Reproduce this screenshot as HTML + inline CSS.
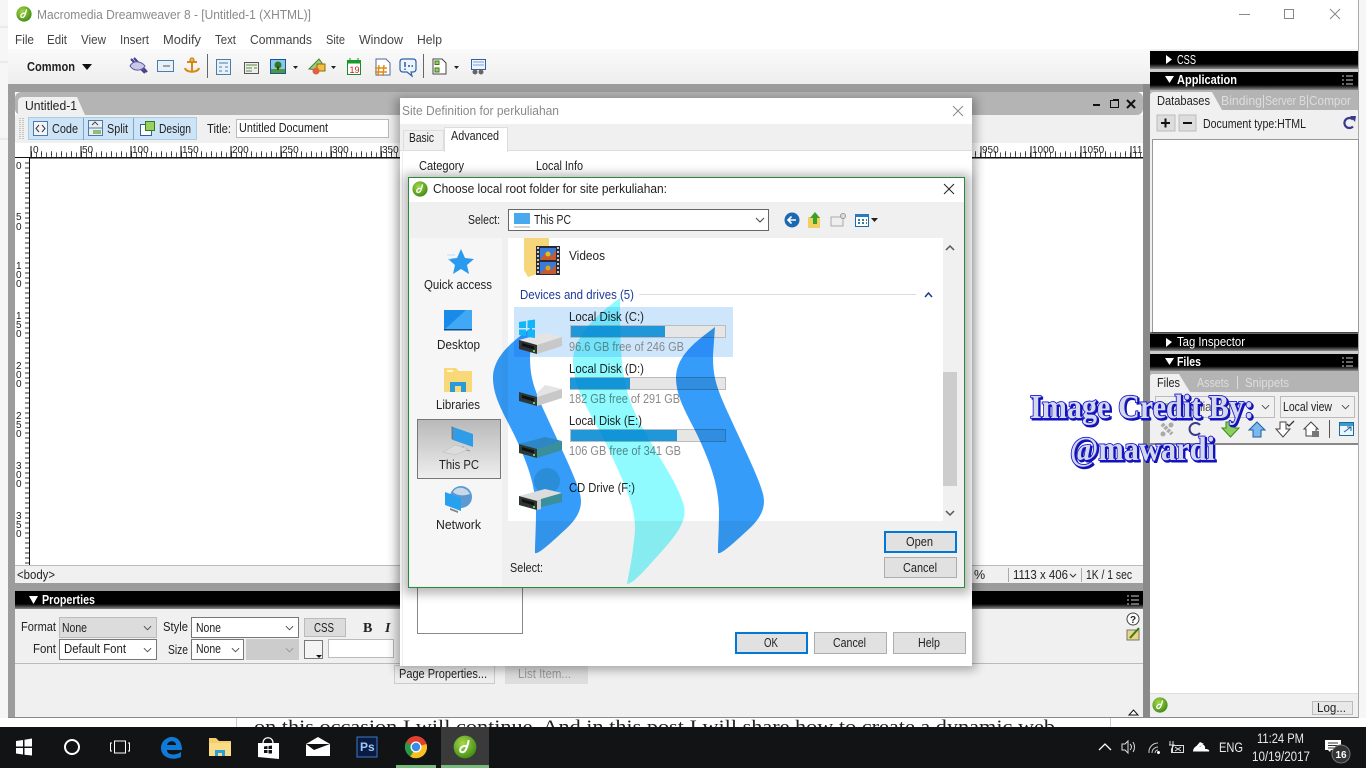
<!DOCTYPE html>
<html lang="en"><head><meta charset="utf-8"><title>Macromedia Dreamweaver 8</title>
<style>
html,body{margin:0;padding:0;width:1366px;height:768px;overflow:hidden;background:#fff}
svg{display:block;position:absolute;left:0;top:0}
text{font-family:"Liberation Sans",sans-serif;font-size:12.5px;fill:#222}
.m{fill:#444}
.g{fill:#999}
.w{fill:#fff}
.b{font-weight:bold}
.n{fill:#1a3a9a}
</style></head><body>
<svg width="1366" height="768" viewBox="0 0 1366 768" xmlns="http://www.w3.org/2000/svg">
<defs>
<linearGradient id="hd" x1="0" y1="0" x2="0" y2="1"><stop offset="0" stop-color="#000"/><stop offset=".72" stop-color="#000"/><stop offset="1" stop-color="#8a8a8a"/></linearGradient>
<linearGradient id="sel" x1="0" y1="0" x2="0" y2="1"><stop offset="0" stop-color="#b8b8b8"/><stop offset="1" stop-color="#eee"/></linearGradient>
<linearGradient id="tb" x1="0" y1="0" x2="0" y2="1"><stop offset="0" stop-color="#fafafa"/><stop offset="1" stop-color="#eee"/></linearGradient>
<radialGradient id="dwg" cx=".4" cy=".35" r=".7"><stop offset="0" stop-color="#a8d84a"/><stop offset="1" stop-color="#3d8a12"/></radialGradient>
<filter id="sh" x="-5%" y="-5%" width="110%" height="110%"><feGaussianBlur stdDeviation="5"/></filter>
<symbol id="dw" viewBox="0 0 16 16"><circle cx="8" cy="8" r="7.600" fill="url(#dwg)"/><path d="M10.500 3.400C10 6 9.300 9 8 10.600 6.800 12 4.600 11.800 4.800 9.800 5 8 7.400 6.600 9.600 7.600" fill="none" stroke="#fff" stroke-width="1.300"/></symbol>
<symbol id="ch" viewBox="0 0 10 6"><path d="M1 1 5 5 9 1" fill="none" stroke="#444" stroke-width="1"/></symbol>
</defs>

<rect width="1366" height="768" fill="#fff"/>
<rect x="0" y="0" width="8" height="727" fill="#f6f6f6"/>
<path d="M0 27H8M0 62H8M0 139H8" stroke="#ddd"/>
<rect x="8" y="0" width="1350" height="720" fill="#fff"/>
<rect x="1358" y="0" width="8" height="727" fill="#f6f6f6"/>
<rect x="1358" y="0" width="1" height="720" fill="#aaa"/>
<rect x="0" y="718" width="1366" height="9" fill="#fff"/>
<path d="M236.500 718V727M1110.500 718V727" stroke="#ccc"/>
<text x="254" y="733" style="font-family:'Liberation Serif',serif;font-size:19px" fill="#333" textLength="801" lengthAdjust="spacingAndGlyphs">on this occasion I will continue. And in this post I will share how to create a dynamic web</text>
<rect x="8" y="717" width="1350" height="1" fill="#8a8a8a"/>

<!-- title + menu -->
<use href="#dw" x="16" y="6" width="16" height="16"/>
<text x="37" y="19" textLength="274" lengthAdjust="spacingAndGlyphs" style="fill:#8a8a8a">Macromedia Dreamweaver 8 - [Untitled-1 (XHTML)]</text>
<path d="M1239 14.500H1250" stroke="#888"/>
<rect x="1284.500" y="9.500" width="9" height="9" fill="none" stroke="#888"/>
<path d="M1330 9 1340 19M1340 9 1330 19" stroke="#888"/>
<text x="15" y="44" class="m" textLength="19" lengthAdjust="spacingAndGlyphs">File</text>
<text x="47" y="44" class="m" textLength="20" lengthAdjust="spacingAndGlyphs">Edit</text>
<text x="81" y="44" class="m" textLength="25" lengthAdjust="spacingAndGlyphs">View</text>
<text x="120" y="44" class="m" textLength="29" lengthAdjust="spacingAndGlyphs">Insert</text>
<text x="163" y="44" class="m" textLength="38" lengthAdjust="spacingAndGlyphs">Modify</text>
<text x="215" y="44" class="m" textLength="21" lengthAdjust="spacingAndGlyphs">Text</text>
<text x="250" y="44" class="m" textLength="62" lengthAdjust="spacingAndGlyphs">Commands</text>
<text x="326" y="44" class="m" textLength="19" lengthAdjust="spacingAndGlyphs">Site</text>
<text x="359" y="44" class="m" textLength="44" lengthAdjust="spacingAndGlyphs">Window</text>
<text x="417" y="44" class="m" textLength="25" lengthAdjust="spacingAndGlyphs">Help</text>

<!-- insert bar -->
<rect x="8" y="49" width="1142" height="35" fill="url(#tb)"/>
<rect x="8" y="84" width="1142" height="8" fill="#9c9c9c"/>
<rect x="8" y="92" width="7" height="625" fill="#9c9c9c"/>
<text x="27" y="71" class="b" textLength="48" lengthAdjust="spacingAndGlyphs">Common</text>
<path d="M82 64H92L87 70Z" fill="#111"/>
<path d="M131 59 145 73M134 58 147 72" stroke="#4a3f90" stroke-width="2.200" fill="none"/><path d="M130 66C134 59 142 62 145 66 142 71 134 72 130 66Z" fill="#c8c8e8" stroke="#5a5a9a"/>
<rect x="157.500" y="60.500" width="16" height="11" fill="#e8f0f8" stroke="#4a7ea8"/><path d="M163 66H170" stroke="#555"/>
<path d="M192 58V72M187 62H197M185 68C186 73 198 73 199 68" fill="none" stroke="#d88a10" stroke-width="2"/><circle cx="192" cy="60" r="2" fill="#f5c050" stroke="#b87010"/>
<path d="M207.500 54V78" stroke="#666"/>
<rect x="216.500" y="59.500" width="14" height="15" fill="#e8f0f8" stroke="#4a7ea8"/><path d="M219 63H228M219 67H222M225 67H228M219 71H222M225 71H228" stroke="#4a7ea8"/>
<rect x="244.500" y="62.500" width="14" height="11" fill="#eee" stroke="#555"/><path d="M246 65H257M246 68H252M254 68H257M246 71H252" stroke="#5a8a3a"/>
<rect x="270.500" y="59.500" width="15" height="14" fill="#88c8e8" stroke="#2050a0"/><rect x="271" y="69" width="14" height="4" fill="#4a9a3a"/><circle cx="278" cy="65" r="3.500" fill="#2a7a2a"/><rect x="277" y="66" width="2" height="4" fill="#5a3a10"/>
<path d="M293 66H298L295.500 69Z" fill="#222"/>
<path d="M309 69 319 59 322 63 318 70Z" fill="#9ad07a" stroke="#4a7a3a"/><rect x="317" y="64" width="8" height="7" fill="#f0c040" stroke="#8a6a10"/><circle cx="316" cy="71" r="3.500" fill="#e06040"/>
<path d="M331 66H336L333.500 69Z" fill="#222"/>
<rect x="347.500" y="60.500" width="13" height="14" fill="#fff" stroke="#1a8a2a"/><rect x="347" y="60" width="14" height="3.500" fill="#1a9a2a"/><path d="M350 58V61M358 58V61" stroke="#1a8a2a"/><text x="349.500" y="73" style="font-size:9px;fill:#c02020">19</text>
<path d="M376 59H386L390 63V75H376Z" fill="#fff" stroke="#4a6a9a"/><path d="M375 68H387M375 72H387M379 65 378 76M384 65 383 76" stroke="#e08a10" stroke-width="1.400"/>
<path d="M403 59H413Q416 59 416 62V69Q416 72 413 72H411L412 76 407 72H403Q400 72 400 69V62Q400 59 403 59Z" fill="#eef4fb" stroke="#3060a8" stroke-width="1.200"/><path d="M405 62V67M405 68.500V70M408 66H410M411.500 66H413" stroke="#2050a0" stroke-width="1.400"/>
<path d="M423.500 54V78" stroke="#666"/>
<path d="M433 59H442L446 63V74H433Z" fill="#fff" stroke="#444"/><rect x="435" y="61" width="4" height="3.500" fill="#9ad060" stroke="#3a7a1a"/><rect x="435" y="68" width="4" height="4" fill="#9ad060" stroke="#3a7a1a"/>
<path d="M454 66H459L456.500 69Z" fill="#222"/>
<rect x="471.500" y="59.500" width="14" height="10" fill="#eef4fb" stroke="#3060a8"/><path d="M473 62H484M473 65H484" stroke="#7aa0d0"/><circle cx="475" cy="72" r="2.500" fill="#666"/><circle cx="481" cy="72" r="2.500" fill="#666"/>

<!-- document window -->
<rect x="15" y="92" width="1128" height="23" fill="#b4b4b4" rx="6"/>
<path d="M18 115V102Q18 97 23 97H77L85 115Z" fill="#f0f0f0"/>
<text x="25" y="110" textLength="52" lengthAdjust="spacingAndGlyphs">Untitled-1</text>
<path d="M1093 105H1100" stroke="#111" stroke-width="2"/>
<rect x="1110.500" y="100.500" width="8" height="7" fill="none" stroke="#111"/><rect x="1113" y="99" width="6" height="2" fill="#111"/>
<path d="M1127 100 1135 108M1135 100 1127 108" stroke="#111" stroke-width="2"/>
<rect x="15" y="115" width="1128" height="28" fill="#f0f0f0"/>
<path d="M20 118V140M23 118V140" stroke="#999" stroke-dasharray="1 1"/>
<rect x="28.500" y="117.500" width="168" height="22" fill="#cde4f7" stroke="#a8cbe6"/>
<path d="M83.500 118V140M133.500 118V140" stroke="#7aa8cc"/>
<rect x="33.500" y="121.500" width="14" height="14" fill="#f4f4f4" stroke="#4a7ab0"/><path d="M39 125 36 128.500 39 132M42 125 45 128.500 42 132" fill="none" stroke="#334"/>
<text x="52" y="133" textLength="26" lengthAdjust="spacingAndGlyphs">Code</text>
<rect x="88.500" y="120.500" width="14" height="15" fill="#eee" stroke="#4a7ab0"/><path d="M89 128H102" stroke="#4a7ab0"/><rect x="93" y="130" width="8" height="4" fill="#8ac078"/><path d="M92 125 95 122 98 125" fill="none" stroke="#445"/>
<text x="107" y="133" textLength="21" lengthAdjust="spacingAndGlyphs">Split</text>
<rect x="140.500" y="124.500" width="11" height="11" fill="#fff" stroke="#3060a0"/><rect x="145.500" y="121.500" width="9" height="9" fill="#9ad060" stroke="#3a7a1a"/>
<text x="159" y="133" textLength="32" lengthAdjust="spacingAndGlyphs">Design</text>
<text x="207" y="133" textLength="24" lengthAdjust="spacingAndGlyphs">Title:</text>
<rect x="236.500" y="119.500" width="152" height="18" fill="#fff" stroke="#bbb"/>
<text x="239" y="132" textLength="89" lengthAdjust="spacingAndGlyphs">Untitled Document</text>

<!-- rulers -->
<rect x="15" y="143" width="1128" height="15" fill="#fff"/>
<rect x="15" y="157" width="1128" height="1.500" fill="#111"/>
<path d="M31 146V158M81 146V158M131 146V158M181 146V158M231 146V158M281 146V158M331 146V158M381 146V158M981 146V158M1031 146V158M1081 146V158M1131 146V158" stroke="#111"/>
<path d="M31 155H400M975 155H1143" stroke="#111" stroke-width="5" stroke-dasharray="1 4" opacity=".7"/>
<path d="M31 153H400M975 153H1143" stroke="#111" stroke-width="4" stroke-dasharray="1 9" opacity=".6"/>
<text x="33" y="153" style="font-size:10px">0</text><text x="82" y="153" style="font-size:10px">50</text><text x="132" y="153" style="font-size:10px">100</text><text x="182" y="153" style="font-size:10px">150</text><text x="232" y="153" style="font-size:10px">200</text><text x="282" y="153" style="font-size:10px">250</text><text x="332" y="153" style="font-size:10px">300</text><text x="382" y="153" style="font-size:10px">350</text>
<text x="982" y="153" style="font-size:10px">950</text><text x="1032" y="153" style="font-size:10px">1000</text><text x="1082" y="153" style="font-size:10px">1050</text><text x="1132" y="153" style="font-size:10px">11</text>
<rect x="15" y="158" width="15" height="407" fill="#fff"/>
<rect x="29" y="158" width="1" height="407" fill="#111"/>
<path d="M25 163H30M25 168H30M25 173H30M25 178H30M25 183H30M25 188H30M25 193H30M25 198H30M25 203H30M25 208H30M25 213H30M25 218H30M25 223H30M25 228H30M25 233H30M25 238H30M25 243H30M25 248H30M25 253H30M25 258H30M25 263H30M25 268H30M25 273H30M25 278H30M25 283H30M25 288H30M25 293H30M25 298H30M25 303H30M25 308H30M25 313H30M25 318H30M25 323H30M25 328H30M25 333H30M25 338H30M25 343H30M25 348H30M25 353H30M25 358H30M25 363H30M25 368H30M25 373H30M25 378H30M25 383H30M25 388H30M25 393H30M25 398H30M25 403H30M25 408H30M25 413H30M25 418H30M25 423H30M25 428H30M25 433H30M25 438H30M25 443H30M25 448H30M25 453H30M25 458H30M25 463H30M25 468H30M25 473H30M25 478H30M25 483H30M25 488H30M25 493H30M25 498H30M25 503H30M25 508H30M25 513H30M25 518H30M25 523H30M25 528H30M25 533H30M25 538H30M25 543H30M25 548H30M25 553H30M25 558H30M25 563H30" stroke="#111" opacity=".85"/>
<text x="16" y="169" style="font-size:10px">0</text>
<text x="16" y="220" style="font-size:10px">5</text><text x="16" y="230" style="font-size:10px">0</text>
<text x="16" y="269" style="font-size:10px">1</text><text x="16" y="278" style="font-size:10px">0</text><text x="16" y="287" style="font-size:10px">0</text>
<text x="16" y="319" style="font-size:10px">1</text><text x="16" y="328" style="font-size:10px">5</text><text x="16" y="337" style="font-size:10px">0</text>
<text x="16" y="369" style="font-size:10px">2</text><text x="16" y="378" style="font-size:10px">0</text><text x="16" y="387" style="font-size:10px">0</text>
<text x="16" y="419" style="font-size:10px">2</text><text x="16" y="428" style="font-size:10px">5</text><text x="16" y="437" style="font-size:10px">0</text>
<text x="16" y="469" style="font-size:10px">3</text><text x="16" y="478" style="font-size:10px">0</text><text x="16" y="487" style="font-size:10px">0</text>
<text x="16" y="519" style="font-size:10px">3</text><text x="16" y="528" style="font-size:10px">5</text><text x="16" y="537" style="font-size:10px">0</text>

<!-- status bar -->
<rect x="15" y="565" width="1128" height="19" fill="#f0f0f0"/>
<rect x="15" y="565" width="1128" height="1" fill="#bbb"/>
<rect x="15" y="583" width="1128" height="8" fill="#9c9c9c"/>
<text x="17" y="579" textLength="38" lengthAdjust="spacingAndGlyphs">&lt;body&gt;</text>
<text x="974" y="579">%</text><path d="M1008.500 568V582M1081.500 568V582" stroke="#aaa"/>
<text x="1013" y="579" textLength="55" lengthAdjust="spacingAndGlyphs">1113 x 406</text><path d="M1070 574 1073 577 1076 574" fill="none" stroke="#333"/>
<text x="1086" y="579" textLength="46" lengthAdjust="spacingAndGlyphs">1K / 1 sec</text>

<!-- properties -->
<rect x="15" y="591" width="1128" height="18" fill="url(#hd)"/>
<path d="M29 596H38L33.500 604Z" fill="#fff"/>
<text x="42" y="604" class="w b" textLength="53" lengthAdjust="spacingAndGlyphs">Properties</text>
<path d="M1127 596H1129M1131 596H1139M1127 600H1129M1131 600H1139M1127 604H1129M1131 604H1139" stroke="#ccc"/>
<rect x="15" y="609" width="1128" height="108" fill="#f0f0f0"/>
<path d="M15 663.500H1143" stroke="#bbb"/>
<rect x="1143" y="84" width="7" height="633" fill="#8a8a8a"/>
<text x="21" y="631" textLength="35" lengthAdjust="spacingAndGlyphs">Format</text>
<rect x="59.500" y="617.500" width="97" height="20" fill="#dcdcdc" stroke="#bbb"/><text x="62" y="632" textLength="25" lengthAdjust="spacingAndGlyphs">None</text><use href="#ch" x="143" y="625" width="9" height="6"/>
<text x="33" y="653" textLength="23" lengthAdjust="spacingAndGlyphs">Font</text>
<rect x="59.500" y="639.500" width="97" height="20" fill="#fff" stroke="#777"/><text x="64" y="653" textLength="62" lengthAdjust="spacingAndGlyphs">Default Font</text><use href="#ch" x="143" y="647" width="9" height="6"/>
<text x="163" y="631" textLength="25" lengthAdjust="spacingAndGlyphs">Style</text>
<rect x="191.500" y="617.500" width="107" height="20" fill="#fff" stroke="#777"/><text x="196" y="632" textLength="25" lengthAdjust="spacingAndGlyphs">None</text><use href="#ch" x="285" y="625" width="9" height="6"/>
<text x="168" y="654" textLength="20" lengthAdjust="spacingAndGlyphs">Size</text>
<rect x="191.500" y="639.500" width="52" height="20" fill="#fff" stroke="#777"/><text x="196" y="653" textLength="25" lengthAdjust="spacingAndGlyphs">None</text><use href="#ch" x="231" y="647" width="9" height="6"/>
<rect x="246" y="639" width="53" height="21" fill="#ccc"/><use href="#ch" x="285" y="647" width="9" height="6" opacity=".4"/>
<rect x="304.500" y="618.500" width="41" height="18" fill="#dcdcdc" stroke="#bbb"/><text x="314" y="632" textLength="20" lengthAdjust="spacingAndGlyphs">CSS</text>
<text x="363" y="632" style="font-family:'Liberation Serif',serif;font-size:14px;font-weight:bold">B</text>
<text x="385" y="632" style="font-family:'Liberation Serif',serif;font-size:14px;font-weight:bold;font-style:italic">I</text>
<rect x="304.500" y="640.500" width="18" height="18" fill="#f4f4f4" stroke="#777"/><path d="M316 655H322L319 658Z" fill="#111"/>
<rect x="328.500" y="639.500" width="65" height="18" fill="#fff" stroke="#bbb"/>
<circle cx="1133" cy="619" r="6" fill="#fff" stroke="#444"/><text x="1130" y="623" style="font-size:10px;font-weight:bold">?</text>
<rect x="1127" y="630" width="12" height="10" fill="#e8d48a" stroke="#776"/><path d="M1130 638 1139 628" stroke="#3a7a1a" stroke-width="2"/>
<path d="M1129 715 1133.500 710 1138 715Z" fill="#fff" stroke="#111"/>
<rect x="394.500" y="665.500" width="100" height="18" fill="#eee" stroke="#ccc"/><text x="399" y="678" textLength="88" lengthAdjust="spacingAndGlyphs">Page Properties...</text>
<rect x="505" y="665" width="83" height="19" fill="#ddd"/><text x="518" y="678" textLength="53" lengthAdjust="spacingAndGlyphs" style="fill:#999">List Item...</text>

<!-- right panels -->
<rect x="1150" y="49" width="208" height="668" fill="#f0f0f0"/>
<rect x="1150" y="51" width="208" height="18" fill="url(#hd)"/>
<path d="M1166 55 1172 59.500 1166 64Z" fill="#fff"/>
<text x="1177" y="64" class="w" textLength="19" lengthAdjust="spacingAndGlyphs">CSS</text>
<rect x="1150" y="69" width="208" height="3" fill="#ccc"/>
<rect x="1150" y="72" width="208" height="18" fill="url(#hd)"/>
<path d="M1165 76H1174L1169.500 83Z" fill="#fff"/>
<text x="1177" y="84" class="w b" textLength="60" lengthAdjust="spacingAndGlyphs">Application</text>
<path d="M1342 76H1344M1346 76H1353M1342 80H1344M1346 80H1353M1342 84H1344M1346 84H1353" stroke="#ccc"/>
<rect x="1150" y="90" width="208" height="20" fill="#b4b4b4"/>
<path d="M1150 110V96Q1150 92 1154 92H1212L1222 110Z" fill="#f0f0f0"/>
<text x="1157" y="105" textLength="53" lengthAdjust="spacingAndGlyphs">Databases</text>
<text x="1221" y="105" textLength="41" lengthAdjust="spacingAndGlyphs" style="fill:#ddd">Binding</text>
<text x="1265" y="105" textLength="41" lengthAdjust="spacingAndGlyphs" style="fill:#ddd">Server B</text>
<text x="1309" y="105" textLength="42" lengthAdjust="spacingAndGlyphs" style="fill:#ddd">Compor</text>
<path d="M1263.500 95V108M1307.500 95V108" stroke="#ddd"/>
<rect x="1157" y="115" width="18" height="16" fill="#ddd" stroke="#bbb"/><path d="M1161 123H1170M1165.500 118.500V127.500" stroke="#111" stroke-width="2"/>
<rect x="1179" y="115" width="17" height="16" fill="#ddd" stroke="#bbb"/><path d="M1183 123H1192" stroke="#111" stroke-width="2"/>
<text x="1203" y="128" textLength="103" lengthAdjust="spacingAndGlyphs">Document type:HTML</text>
<path d="M1353 119.500A5 5 0 1 0 1353 126.500" fill="none" stroke="#3a3a8a" stroke-width="2.200"/><path d="M1350 116 1356 116 1355 122Z" fill="#3a3a8a"/>
<rect x="1152.500" y="139.500" width="206" height="193" fill="#fff" stroke="#999"/>
<rect x="1150" y="332" width="208" height="2" fill="#111" opacity=".6"/>
<rect x="1150" y="334" width="208" height="17" fill="url(#hd)"/>
<path d="M1166 338 1172 342 1166 347Z" fill="#fff"/>
<text x="1177" y="346" class="w" textLength="68" lengthAdjust="spacingAndGlyphs">Tag Inspector</text>
<rect x="1150" y="351" width="208" height="3" fill="#ccc"/>
<rect x="1150" y="354" width="208" height="17" fill="url(#hd)"/>
<path d="M1165 358H1174L1169.500 365Z" fill="#fff"/>
<text x="1177" y="366" class="w b" textLength="24" lengthAdjust="spacingAndGlyphs">Files</text>
<path d="M1342 358H1344M1346 358H1353M1342 362H1344M1346 362H1353M1342 366H1344M1346 366H1353" stroke="#ccc"/>
<rect x="1150" y="371" width="208" height="21" fill="#b4b4b4"/>
<path d="M1150 392V377Q1150 374 1153 374H1179L1190 392Z" fill="#f0f0f0"/>
<text x="1157" y="387" textLength="23" lengthAdjust="spacingAndGlyphs">Files</text>
<text x="1197" y="387" textLength="32" lengthAdjust="spacingAndGlyphs" style="fill:#ddd">Assets</text>
<text x="1245" y="387" textLength="44" lengthAdjust="spacingAndGlyphs" style="fill:#ddd">Snippets</text>
<path d="M1237.500 376V389" stroke="#ddd"/>
<rect x="1155.500" y="396.500" width="119" height="21" fill="#f0f0f0" stroke="#bbb"/>
<rect x="1160" y="403" width="10" height="9" fill="#9ad060"/>
<text x="1171" y="411" textLength="60" lengthAdjust="spacingAndGlyphs" style="fill:#555">perkuliahan</text>
<use href="#ch" x="1261" y="404" width="9" height="6"/>
<rect x="1280.500" y="396.500" width="74" height="21" fill="#f0f0f0" stroke="#bbb"/>
<text x="1283" y="411" textLength="49" lengthAdjust="spacingAndGlyphs">Local view</text>
<use href="#ch" x="1341" y="404" width="9" height="6"/>
<path d="M1162 424 1172 434" stroke="#aaa" stroke-width="4" stroke-dasharray="3 1"/><circle cx="1163" cy="434" r="2.500" fill="#aaa"/><circle cx="1171" cy="425" r="2.500" fill="#aaa"/>
<path d="M1200 425A6 6 0 1 0 1200 433" fill="none" stroke="#3a3a8a" stroke-width="2"/>
<path d="M1226 422H1235V428H1239L1230.500 437 1222 428H1226Z" fill="#8ad060" stroke="#3a8a1a"/>
<path d="M1257 422 1265 430H1261V437H1253V430H1249Z" fill="#7ab8f0" stroke="#2060a0"/>
<path d="M1280 422H1286V429H1290L1283 437 1276 429H1280Z" fill="#fff" stroke="#444"/><path d="M1287 424 1289 426 1294 421" fill="none" stroke="#333" stroke-width="1.300"/>
<path d="M1311 422 1318 429H1316V436H1306V429H1304Z" fill="#fff" stroke="#444"/><rect x="1312" y="431" width="7" height="6" fill="#777"/>
<path d="M1329.500 420V438" stroke="#555"/>
<rect x="1339.500" y="422.500" width="14" height="13" fill="#eef4fb" stroke="#1a6a9a"/><rect x="1340" y="423" width="13" height="3" fill="#3a9ac8"/><path d="M1344 432 1351 427M1347 427H1351V431" stroke="#2060a0" fill="none"/>
<rect x="1150" y="443" width="208" height="2" fill="#888"/>
<rect x="1150" y="445" width="208" height="250" fill="#fff"/>
<rect x="1150" y="693" width="208" height="1" fill="#ddd"/>
<rect x="1150" y="694" width="208" height="23" fill="#f0f0f0"/>
<use href="#dw" x="1152" y="697" width="16" height="16"/>
<rect x="1312.500" y="701.500" width="40" height="13" fill="#e8e8e8" stroke="#bbb"/>
<text x="1317" y="712" textLength="29" lengthAdjust="spacingAndGlyphs">Log...</text>

<!-- Site definition dialog -->
<rect x="396" y="98" width="580" height="572" fill="#000" opacity=".3" filter="url(#sh)"/>
<rect x="400" y="98" width="572" height="568" fill="#fff"/>
<text x="402" y="115" textLength="157" lengthAdjust="spacingAndGlyphs" style="fill:#8a8a8a">Site Definition for perkuliahan</text>
<path d="M953 106 963 116M963 106 953 116" stroke="#8a8a8a"/>
<rect x="400" y="124" width="572" height="26" fill="#f0f0f0"/>
<rect x="403.500" y="130.500" width="40" height="20" fill="#f0f0f0" stroke="#ddd"/>
<text x="409" y="142" textLength="25" lengthAdjust="spacingAndGlyphs">Basic</text>
<rect x="444.500" y="127.500" width="63" height="24" fill="#fff" stroke="#ddd"/>
<rect x="445" y="148" width="62" height="4" fill="#fff"/>
<text x="451" y="140" textLength="48" lengthAdjust="spacingAndGlyphs">Advanced</text>
<path d="M400 150.500H445M507 150.500H972" stroke="#ddd"/>
<path d="M402.500 150V666" stroke="#eee"/>
<text x="419" y="170" textLength="45" lengthAdjust="spacingAndGlyphs">Category</text>
<text x="536" y="170" textLength="47" lengthAdjust="spacingAndGlyphs">Local Info</text>
<rect x="417.500" y="587.500" width="105" height="46" fill="#fff" stroke="#888"/>
<rect x="736" y="633" width="71" height="20" fill="#e1e1e1" stroke="#0078d7" stroke-width="2"/>
<text x="764" y="647" textLength="14" lengthAdjust="spacingAndGlyphs">OK</text>
<rect x="814.500" y="632.500" width="72" height="21" fill="#e1e1e1" stroke="#adadad"/>
<text x="833" y="647" textLength="33" lengthAdjust="spacingAndGlyphs">Cancel</text>
<rect x="893.500" y="632.500" width="72" height="21" fill="#e1e1e1" stroke="#adadad"/>
<text x="918" y="647" textLength="22" lengthAdjust="spacingAndGlyphs">Help</text>

<!-- Choose folder dialog -->
<rect x="404" y="174" width="566" height="420" fill="#000" opacity=".28" filter="url(#sh)"/>
<rect x="408.500" y="177.500" width="556" height="410" fill="#f0f0f0" stroke="#2a8a3a"/>
<rect x="409" y="178" width="555" height="24" fill="#fff"/>
<use href="#dw" x="412" y="181" width="16" height="16"/>
<text x="433" y="193" textLength="234" lengthAdjust="spacingAndGlyphs">Choose local root folder for site perkuliahan:</text>
<path d="M944 184 954 194M954 184 944 194" stroke="#222"/>
<rect x="410" y="238" width="92" height="348" fill="#f6f6f6"/>
<text x="468" y="224" textLength="32" lengthAdjust="spacingAndGlyphs">Select:</text>
<rect x="508.500" y="209.500" width="260" height="21" fill="#fff" stroke="#666"/>
<rect x="514" y="213" width="16" height="11" fill="#4aa8ee"/><path d="M514 227H530" stroke="#aaa"/>
<text x="534" y="224" textLength="37" lengthAdjust="spacingAndGlyphs">This PC</text>
<use href="#ch" x="755" y="217" width="10" height="6"/>
<circle cx="792" cy="220" r="7.500" fill="#1a6ab0"/><path d="M796 220H789M791.500 216.500 788 220 791.500 223.500" fill="none" stroke="#fff" stroke-width="1.600"/>
<path d="M808 217H820V228H808Z" fill="#f2d060"/><path d="M815 212 820 218H817V224H813V218H810Z" fill="#3aa02a"/>
<path d="M831 217H843V226H831Z" fill="#eee" stroke="#aaa"/><circle cx="843" cy="216" r="2.500" fill="#ddd" stroke="#999"/>
<rect x="855.500" y="214.500" width="13" height="12" fill="#fff" stroke="#1a6ab0"/><rect x="855" y="214" width="14" height="3" fill="#2a7ac0"/><path d="M858 220H860M862 220H864M866 220H867M858 223H860M862 223H864M866 223H867" stroke="#3a7a9a" stroke-width="2"/>
<path d="M871 218H878L874.500 222Z" fill="#222"/>

<!-- file list -->
<rect x="508" y="238" width="435" height="283" fill="#fff"/>
<rect x="943" y="372" width="14" height="114" fill="#cdcdcd"/>
<path d="M946 250 950 246 954 250" fill="none" stroke="#555" stroke-width="1.500"/>
<path d="M946 511 950 515 954 511" fill="none" stroke="#555" stroke-width="1.500"/>
<path d="M524 238H549V270L528 277 524 270Z" fill="#f6d67a"/>
<rect x="536" y="246" width="24" height="29" fill="#2a2a34"/>
<rect x="540" y="248" width="16" height="12" fill="#3a7ad8"/><rect x="540" y="262" width="16" height="12" fill="#3a7ad8"/><path d="M540 260 546 252 552 256 556 250V260ZM540 274 546 268 552 270 556 264V274Z" fill="#c85a30"/><circle cx="548" cy="254" r="2.500" fill="#e0c020"/><circle cx="548" cy="268" r="2.500" fill="#e0a020"/>
<path d="M538 247V275M558 247V275" stroke="#ccc" stroke-width="2" stroke-dasharray="2 2"/>
<text x="569" y="260" textLength="36" lengthAdjust="spacingAndGlyphs">Videos</text>
<text x="520" y="299" class="n" textLength="114" lengthAdjust="spacingAndGlyphs">Devices and drives (5)</text>
<path d="M639 294.500H916" stroke="#d5dde5"/>
<path d="M925 297 928.500 293 932 297" fill="none" stroke="#1a3a8a" stroke-width="1.500"/>
<rect x="514" y="307" width="219" height="50" fill="#cde6fb"/>
<text x="569" y="321" textLength="75" lengthAdjust="spacingAndGlyphs">Local Disk (C:)</text>
<rect x="570.500" y="325.500" width="155" height="12" fill="#e6e6e6" stroke="#bcbcbc"/><rect x="571" y="326" width="94" height="11" fill="#1f97d8"/>
<text x="569" y="351" textLength="115" lengthAdjust="spacingAndGlyphs" style="fill:#8a8a8a">96.6 GB free of 246 GB</text>
<text x="569" y="373" textLength="75" lengthAdjust="spacingAndGlyphs">Local Disk (D:)</text>
<rect x="570.500" y="377.500" width="155" height="12" fill="#e6e6e6" stroke="#bcbcbc"/><rect x="570" y="378" width="60" height="11" fill="#1f97d8"/>
<text x="569" y="403" textLength="111" lengthAdjust="spacingAndGlyphs" style="fill:#8a8a8a">182 GB free of 291 GB</text>
<text x="569" y="425" textLength="73" lengthAdjust="spacingAndGlyphs">Local Disk (E:)</text>
<rect x="570.500" y="429.500" width="155" height="12" fill="#e6e6e6" stroke="#bcbcbc"/><rect x="571" y="430" width="106" height="11" fill="#1f97d8"/>
<text x="569" y="455" textLength="112" lengthAdjust="spacingAndGlyphs" style="fill:#8a8a8a">106 GB free of 341 GB</text>
<text x="569" y="492" textLength="66" lengthAdjust="spacingAndGlyphs">CD Drive (F:)</text>

<!-- sidebar -->
<path d="M461 249 465 258 474 259 467 265 469 274 461 269 453 274 455 265 448 259 457 258Z" fill="#2a9aee"/>
<path d="M447 255H455M449 259H451" stroke="#bcdcf4"/>
<text x="424" y="289" textLength="68" lengthAdjust="spacingAndGlyphs">Quick access</text>
<rect x="444" y="310" width="28" height="20" fill="#1a8ae8"/><path d="M444 330 466 310H472V330Z" fill="#40a8f4"/><rect x="444" y="329" width="28" height="1.500" fill="#0a4a90"/>
<text x="437" y="349" textLength="43" lengthAdjust="spacingAndGlyphs">Desktop</text>
<path d="M444 368H456L459 371H472V392H444Z" fill="#f8d878"/><rect x="447" y="370" width="6" height="2" fill="#fff6cc"/>
<path d="M450 392V382H466V392H461V386H455V392Z" fill="#2a9ad8"/>
<text x="436" y="409" textLength="44" lengthAdjust="spacingAndGlyphs">Libraries</text>
<rect x="417" y="419" width="83" height="59" fill="url(#sel)"/>
<rect x="417.500" y="419.500" width="83" height="59" fill="none" stroke="#777"/>
<path d="M453 427 473 434V447L453 440Z" fill="#2f9ce8"/><path d="M451.500 426 453 427V440L451.500 439Z" fill="#777"/>
<path d="M463 446V449L470 451" stroke="#999" fill="none"/>
<path d="M443 452 455 445 468 449 456 455Z" fill="#dcdcdc" stroke="#bbb" stroke-width=".5"/>
<text x="439" y="469" textLength="40" lengthAdjust="spacingAndGlyphs">This PC</text>
<circle cx="461" cy="497" r="11" fill="#5a9ad0"/><path d="M453 492C456 486 466 486 470 494 464 496 457 496 453 492Z" fill="#c8d8e8"/>
<path d="M445 492 461 498V511L445 505Z" fill="#28a0f0"/><path d="M450 508 458 511V513L450 510Z" fill="#888"/>
<text x="436" y="529" textLength="45" lengthAdjust="spacingAndGlyphs">Network</text>

<rect x="885" y="532" width="71" height="20" fill="#e1e1e1" stroke="#0078d7" stroke-width="2"/>
<text x="906" y="546" textLength="27" lengthAdjust="spacingAndGlyphs">Open</text>
<rect x="884.500" y="557.500" width="72" height="20" fill="#e1e1e1" stroke="#adadad"/>
<text x="903" y="572" textLength="34" lengthAdjust="spacingAndGlyphs">Cancel</text>
<text x="510" y="572" textLength="33" lengthAdjust="spacingAndGlyphs">Select:</text>

<!-- Steem logo -->
<g style="mix-blend-mode:multiply">
<path d="M620 298C600 312 573 335 573 362 574 395 596 420 610 452 624 484 639 510 634 540 632 560 629 572 627 584 634 583 645 570 662 551 678 533 690 518 682 500 675 478 650 445 636 415 622 385 620 360 620 298Z" fill="#90fbff"/>
</g>
<g style="mix-blend-mode:multiply">
<path d="M532 327C515 340 493 355 493 378 493 400 508 420 518 443 528 466 535 484 536 510 536 530 535 542 535 553 538 555 553 541 568 527 579 516 583 506 580 494 576 478 560 446 546 415 532 385 530 375 530 355Z" fill="#359cf9"/>
<path d="M715 327C698 340 676 355 676 378 676 400 691 420 701 443 711 466 718 484 719 510 719 530 718 542 718 553 721 555 736 541 751 527 762 516 766 506 763 494 759 478 743 446 729 415 715 385 713 375 713 355Z" fill="#359cf9"/>
</g>

<!-- drives over the waves -->
<g transform="translate(519 333)"><path d="M0 7 26 0 43 4 18 12Z" fill="#e4e4e4"/><path d="M18 12 43 4V13L18 21Z" fill="#c8c8c8"/><path d="M0 7 18 12V21L0 16Z" fill="#2e3330"/><path d="M3 10 15 13.500V16.500L3 13Z" fill="#111"/><rect x="14" y="17" width="2" height="2" fill="#6c6"/></g>
<path d="M519 322 526 321V328H519ZM527.500 320.500 535 319.500V328H527.500ZM519 329.500H526V336L519 335ZM527.500 329.500H535V338L527.500 337Z" fill="#12b5f5"/>
<g transform="translate(519 385)"><path d="M18 8 26 0 43 4 18 12Z" fill="#e4e4e4"/><path d="M18 12 43 4V13L18 21Z" fill="#c8c8c8"/><path d="M0 7 18 12V21L0 16Z" fill="#2b3a38"/><path d="M3 10 15 13.500V16.500L3 13Z" fill="#111"/><rect x="14" y="17" width="2" height="2" fill="#6c6"/></g>
<g transform="translate(519 437)"><path d="M0 7 26 0 43 4 18 12Z" fill="#2d87c4"/><path d="M18 12 43 4V13L18 21Z" fill="#3a8f9a"/><path d="M0 7 18 12V21L0 16Z" fill="#2b3a38"/><path d="M3 10 15 13.500V16.500L3 13Z" fill="#111"/><rect x="14" y="17" width="2" height="2" fill="#6c6"/></g>
<circle cx="547" cy="481" r="13" fill="#2a8dd8"/>
<g transform="translate(519 489)"><path d="M0 7 26 0 43 4 18 12Z" fill="#dcdcdc"/><path d="M22 10 43 4V13L22 18Z" fill="#3a8f9a"/><path d="M18 12 22 11V20L18 21Z" fill="#ccc"/><path d="M0 7 18 12V21L0 16Z" fill="#2e3330"/><path d="M3 10 15 13.500V16.500L3 13Z" fill="#111"/><rect x="14" y="17" width="2" height="2" fill="#6c6"/></g>

<!-- Credit text -->
<text x="1031.500" y="419.500" style="font-family:'Liberation Serif',serif;font-size:34px;font-weight:bold;fill:#556;stroke:#1212b0;stroke-width:2px" textLength="224" lengthAdjust="spacingAndGlyphs">Image Credit By:</text>
<text x="1071.500" y="461.500" style="font-family:'Liberation Serif',serif;font-size:34px;font-weight:bold;fill:#556;stroke:#1212b0;stroke-width:2px" textLength="145" lengthAdjust="spacingAndGlyphs">@mawardi</text>
<text x="1030" y="418" style="font-family:'Liberation Serif',serif;font-size:34px;font-weight:bold;fill:#d4d8e8;stroke:#1212d8;stroke-width:1.800px;paint-order:stroke" textLength="224" lengthAdjust="spacingAndGlyphs">Image Credit By:</text>
<text x="1070" y="460" style="font-family:'Liberation Serif',serif;font-size:34px;font-weight:bold;fill:#d4d8e8;stroke:#1212d8;stroke-width:1.800px;paint-order:stroke" textLength="145" lengthAdjust="spacingAndGlyphs">@mawardi</text>

<!-- taskbar -->
<rect x="0" y="727" width="1366" height="41" fill="#121314"/>
<rect x="441" y="727" width="48" height="41" fill="#3a3a3a"/>
<rect x="396" y="765" width="40" height="3" fill="#76b97a"/>
<rect x="441" y="765" width="48" height="3" fill="#76b97a"/>
<path d="M16 741 23 740V746.500H16ZM24.500 739.800 32 738.500V746.500H24.500ZM16 748H23V754.500L16 753.500ZM24.500 748H32V755.500L24.500 754.700Z" fill="#fff"/>
<circle cx="72" cy="747" r="7" fill="none" stroke="#fff" stroke-width="2"/>
<rect x="114.500" y="741" width="11" height="12" fill="none" stroke="#fff"/>
<path d="M112 743H110.500V751H112M128 743H129.500V751H128" fill="none" stroke="#fff"/>
<path fill-rule="evenodd" d="M161 748C161 741 167 737 172 737 178 737 182 742 182 750H167C167 755 175 756 181 752V757C173 761 161 758 161 748ZM167 745H176C176 740 168 740 167 745Z" fill="#0f7ad8"/>
<path d="M209 738H216L219 741H231V756H209Z" fill="#f5cd6c"/><path d="M209 743H231V756H209Z" fill="#f9dc85"/><path d="M215 756V750H225V756H222V753H218V756Z" fill="#2aa0d8"/>
<path d="M258 743H279V759L258 757Z" fill="#fff"/><path d="M263 743C263 736 273 736 273 743" fill="none" stroke="#fff" stroke-width="1.300"/>
<path d="M264 746.500 267.500 746V749H264ZM268.500 746 272 745.500V749H268.500ZM264 750H267.500V753H264ZM268.500 750H272V753.500H268.500Z" fill="#111"/>
<path d="M306 744 318 737 330 744V756H306Z" fill="#fff"/><path d="M306 744H330L314 750Z" fill="#111"/>
<rect x="357" y="737" width="20" height="20" fill="#0a1a40" stroke="#3a7ac8"/><text x="360" y="751" style="font-size:12px;font-weight:bold;fill:#9ac8f8">Ps</text>
<circle cx="416" cy="747" r="11" fill="#e04030"/><path d="M416 747 426.500 744A11 11 0 0 1 410 756.500Z" fill="#f7c020"/><path d="M416 747 410.500 756.500A11 11 0 0 1 406 742Z" fill="#2a9a48"/><circle cx="416" cy="747" r="5.500" fill="#fff"/><circle cx="416" cy="747" r="4.200" fill="#3a8ae8"/>
<use href="#dw" x="453" y="735" width="24" height="24"/>
<path d="M1099 750 1105 744 1111 750" fill="none" stroke="#fff" stroke-width="1.300"/>
<path d="M1122 744H1125L1128 741V753L1125 750H1122Z" fill="none" stroke="#ddd"/><path d="M1130 744C1132 746 1132 748 1130 750M1133 742C1135 745 1135 749 1133 752" fill="none" stroke="#ddd"/>
<path d="M1149 753A9 9 0 0 1 1158 743M1152 753A6 6 0 0 1 1158 747M1155 753A3 3 0 0 1 1158 750" fill="none" stroke="#ccc"/><circle cx="1158.500" cy="752.500" r="1.500" fill="#fff"/>
<path d="M1170 741V745M1173 741V745M1169 745H1174L1171.500 749V753" fill="none" stroke="#ddd"/><rect x="1172.500" y="745.500" width="11" height="7" fill="none" stroke="#ddd"/><path d="M1175 747 1181 751M1181 747 1175 751" stroke="#ddd"/>
<path d="M1193 751C1194 746 1198 745 1200 747 1202 743 1206 745 1205 749 1208 749 1210 750 1209 751.500H1193Z" fill="#fff"/><path d="M1193 750 1200 742 1204 744" fill="#fff"/>
<text x="1219" y="752" textLength="24" lengthAdjust="spacingAndGlyphs" style="fill:#e8e8e8;font-size:13.500px">ENG</text>
<text x="1257" y="743" textLength="47" lengthAdjust="spacingAndGlyphs" style="fill:#e8e8e8;font-size:13.500px">11:24 PM</text>
<text x="1252" y="761" textLength="58" lengthAdjust="spacingAndGlyphs" style="fill:#e8e8e8;font-size:13.500px">10/19/2017</text>
<path d="M1325 740H1341V750H1331L1330 752 1328 750H1325Z" fill="#fff"/><path d="M1328 743H1338M1328 745.500H1338M1328 748H1335" stroke="#333"/>
<circle cx="1341" cy="754" r="9" fill="#333" stroke="#777"/><text x="1335.500" y="758" style="font-size:10px;font-weight:bold;fill:#fff">16</text>
</svg>
</body></html>
